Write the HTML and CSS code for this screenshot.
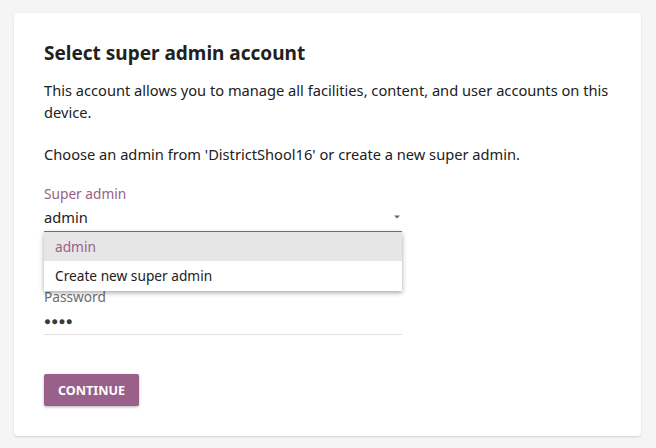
FILE: index.html
```html
<!DOCTYPE html>
<html>
<head>
<meta charset="utf-8">
<link rel="stylesheet" href="styles.css">
</head>
<body>
<div class="card">
  <h1 class="title">Select super admin account</h1>
  <p class="text">This account allows you to manage all facilities, content, and user accounts on this device.</p>
  <p class="text">Choose an admin from 'DistrictShool16' or create a new super admin.</p>
  <div class="field select">
    <div class="label purple">Super admin</div>
    <div class="value-row">
      <span class="value">admin</span>
      <svg class="arrow" width="10" height="6" viewBox="0 0 10 6"><path d="M2 1.5h6L5 4.5z" fill="#666"/></svg>
    </div>
    <div class="menu">
      <div class="item active">admin</div>
      <div class="item">Create new super admin</div>
    </div>
  </div>
  <div class="field pw">
    <div class="label gray">Password</div>
    <div class="value-row">
      <span class="dots">●●●●</span>
    </div>
  </div>
  <button class="btn">CONTINUE</button>
</div>
</body>
</html>
```
FILE: styles.css
```css
html, body { margin: 0; padding: 0; }
body {
  background: #f5f5f5;
  font-family: "Noto Sans", sans-serif;
  color: #212121;
  width: 656px;
  height: 448px;
  overflow: hidden;
}
.card {
  margin: 13px 15px 0 14px;
  background: #fff;
  border-radius: 4px;
  box-shadow: 0 1px 2px rgba(0,0,0,0.15);
  height: 423px;
  box-sizing: border-box;
  padding: 28px 30px 0 30px;
}
.title {
  margin: 0 0 14px 0;
  font-size: 19px;
  font-weight: 700;
  line-height: 24px;
}
.text {
  margin: 0 0 20px 0;
  font-size: 14.65px;
  line-height: 22px;
}
.field { position: relative; width: 358px; }
.select { margin-top: 8px; }
.label { font-size: 13.7px; line-height: 18px; }
.purple { color: #996189; }
.gray { color: #6e6e6e; }
.value-row {
  display: flex;
  align-items: center;
  justify-content: space-between;
  height: 28px;
  border-bottom: 1px solid #996189;
}
.value { font-size: 14.65px; }
.menu {
  position: absolute;
  left: 0;
  top: 47px;
  width: 358px;
  background: #fff;
  box-shadow: 0 2px 4px rgba(0,0,0,0.25), 0 1px 6px rgba(0,0,0,0.12);
  z-index: 2;
}
.item {
  height: 29px;
  line-height: 29px;
  padding-left: 11px;
  font-size: 13.7px;
}
.item + .item { height: 30px; line-height: 30px; }
.item.active { background: #e6e6e6; color: #996189; }
.pw { margin-top: 56px; }
.pw .value-row { border-bottom: 1px solid #e0e0e0; }
.dots { font-size: 11.5px; letter-spacing: 0.3px; color: #3a3a3a; }
.btn {
  margin-top: 39px;
  background: #996189;
  color: #fff;
  border: none;
  border-radius: 2px;
  font-family: "Noto Sans", sans-serif;
  font-weight: 700;
  font-size: 12.6px;
  width: 95px;
  height: 32px;
  box-shadow: 0 1px 3px rgba(0,0,0,0.3);
  padding: 0;
}
```
